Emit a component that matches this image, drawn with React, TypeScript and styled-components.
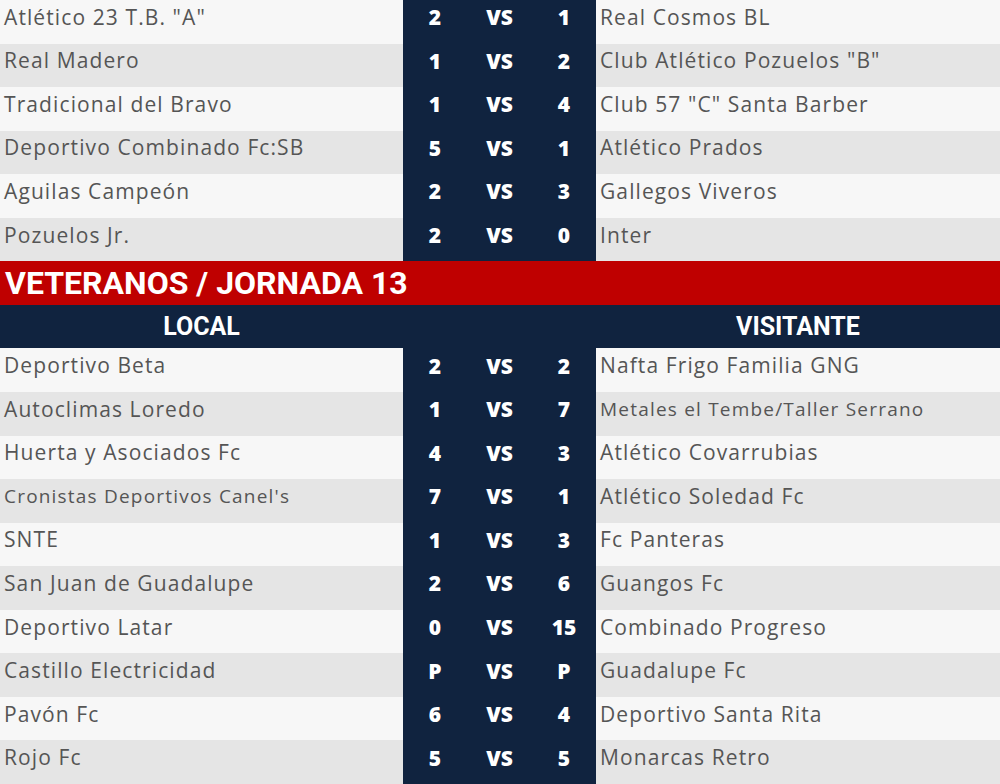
import React from "react";
import styled, { createGlobalStyle } from "styled-components";

const GlobalStyle = createGlobalStyle`
  html, body { margin: 0; padding: 0; background: #ffffff; }
  #root { width: 1000px; height: 784px; }
`;

type Match = { local: string; a: string; b: string; visit: string; small?: "local" | "visit" };

const top: Match[] = [
  { local: 'Atlético 23 T.B. "A"', a: "2", b: "1", visit: "Real Cosmos BL" },
  { local: "Real Madero", a: "1", b: "2", visit: 'Club Atlético Pozuelos "B"' },
  { local: "Tradicional del Bravo", a: "1", b: "4", visit: 'Club 57 "C" Santa Barber' },
  { local: "Deportivo Combinado Fc:SB", a: "5", b: "1", visit: "Atlético Prados" },
  { local: "Aguilas Campeón", a: "2", b: "3", visit: "Gallegos Viveros" },
  { local: "Pozuelos Jr.", a: "2", b: "0", visit: "Inter" },
];

const vets: Match[] = [
  { local: "Deportivo Beta", a: "2", b: "2", visit: "Nafta Frigo Familia GNG" },
  { local: "Autoclimas Loredo", a: "1", b: "7", visit: "Metales el Tembe/Taller Serrano", small: "visit" },
  { local: "Huerta y Asociados Fc", a: "4", b: "3", visit: "Atlético Covarrubias" },
  { local: "Cronistas Deportivos Canel's", a: "7", b: "1", visit: "Atlético Soledad Fc", small: "local" },
  { local: "SNTE", a: "1", b: "3", visit: "Fc Panteras" },
  { local: "San Juan de Guadalupe", a: "2", b: "6", visit: "Guangos Fc" },
  { local: "Deportivo Latar", a: "0", b: "15", visit: "Combinado Progreso" },
  { local: "Castillo Electricidad", a: "P", b: "P", visit: "Guadalupe Fc" },
  { local: "Pavón Fc", a: "6", b: "4", visit: "Deportivo Santa Rita" },
  { local: "Rojo Fc", a: "5", b: "5", visit: "Monarcas Retro" },
];

const Board = styled.div`
  width: 1000px;
  height: 784px;
  display: grid;
  grid-template-rows: repeat(18, 1fr);
  overflow: hidden;
`;

const Row = styled.div<{ $alt: boolean }>`
  display: grid;
  grid-template-columns: 403px 193px 1fr;
  background: ${(p) => (p.$alt ? "#e5e5e5" : "#f7f7f7")};
  min-height: 0;
`;

const Team = styled.div<{ $small?: boolean }>`
  display: flex;
  align-items: center;
  padding: 0 0 10px 4px;
  font-family: "Open Sans", "Noto Sans", sans-serif;
  font-size: ${(p) => (p.$small ? "19px" : "21px")};
  letter-spacing: ${(p) => (p.$small ? "1.2px" : "1.1px")};
  color: #555555;
  white-space: nowrap;
  overflow: hidden;
`;

const ScoreBlock = styled.div`
  display: grid;
  grid-template-columns: 64px 65px 64px;
  background: #10233f;
  color: #ffffff;
  font-family: "Open Sans", "Noto Sans", sans-serif;
  font-weight: 800;
  font-size: 21px;
`;

const ScoreCell = styled.div`
  display: flex;
  align-items: center;
  justify-content: center;
  padding-bottom: 9px;
`;

const Title = styled.div`
  display: flex;
  align-items: center;
  padding-left: 5px;
  background: #bf0000;
  color: #ffffff;
  font-family: Roboto, "Liberation Sans", sans-serif;
  font-weight: 700;
  font-size: 32px;
`;

const HeadRow = styled.div`
  display: grid;
  grid-template-columns: 403px 193px 1fr;
  background: #10233f;
  color: #ffffff;
  font-family: Roboto, "Liberation Sans", sans-serif;
  font-weight: 700;
  font-size: 25px;
`;

const HeadCell = styled.div`
  display: flex;
  align-items: center;
  justify-content: center;
`;

const MatchRow: React.FC<{ m: Match; alt: boolean }> = ({ m, alt }) => (
  <Row $alt={alt}>
    <Team $small={m.small === "local"}>{m.local}</Team>
    <ScoreBlock>
      <ScoreCell>{m.a}</ScoreCell>
      <ScoreCell>VS</ScoreCell>
      <ScoreCell>{m.b}</ScoreCell>
    </ScoreBlock>
    <Team $small={m.small === "visit"}>{m.visit}</Team>
  </Row>
);

export default function App() {
  return (
    <>
      <GlobalStyle />
      <Board>
        {top.map((m, i) => (
          <MatchRow key={"t" + i} m={m} alt={i % 2 === 1} />
        ))}
        <Title>VETERANOS / JORNADA 13</Title>
        <HeadRow>
          <HeadCell>LOCAL</HeadCell>
          <HeadCell />
          <HeadCell>VISITANTE</HeadCell>
        </HeadRow>
        {vets.map((m, i) => (
          <MatchRow key={"v" + i} m={m} alt={i % 2 === 1} />
        ))}
      </Board>
    </>
  );
}
